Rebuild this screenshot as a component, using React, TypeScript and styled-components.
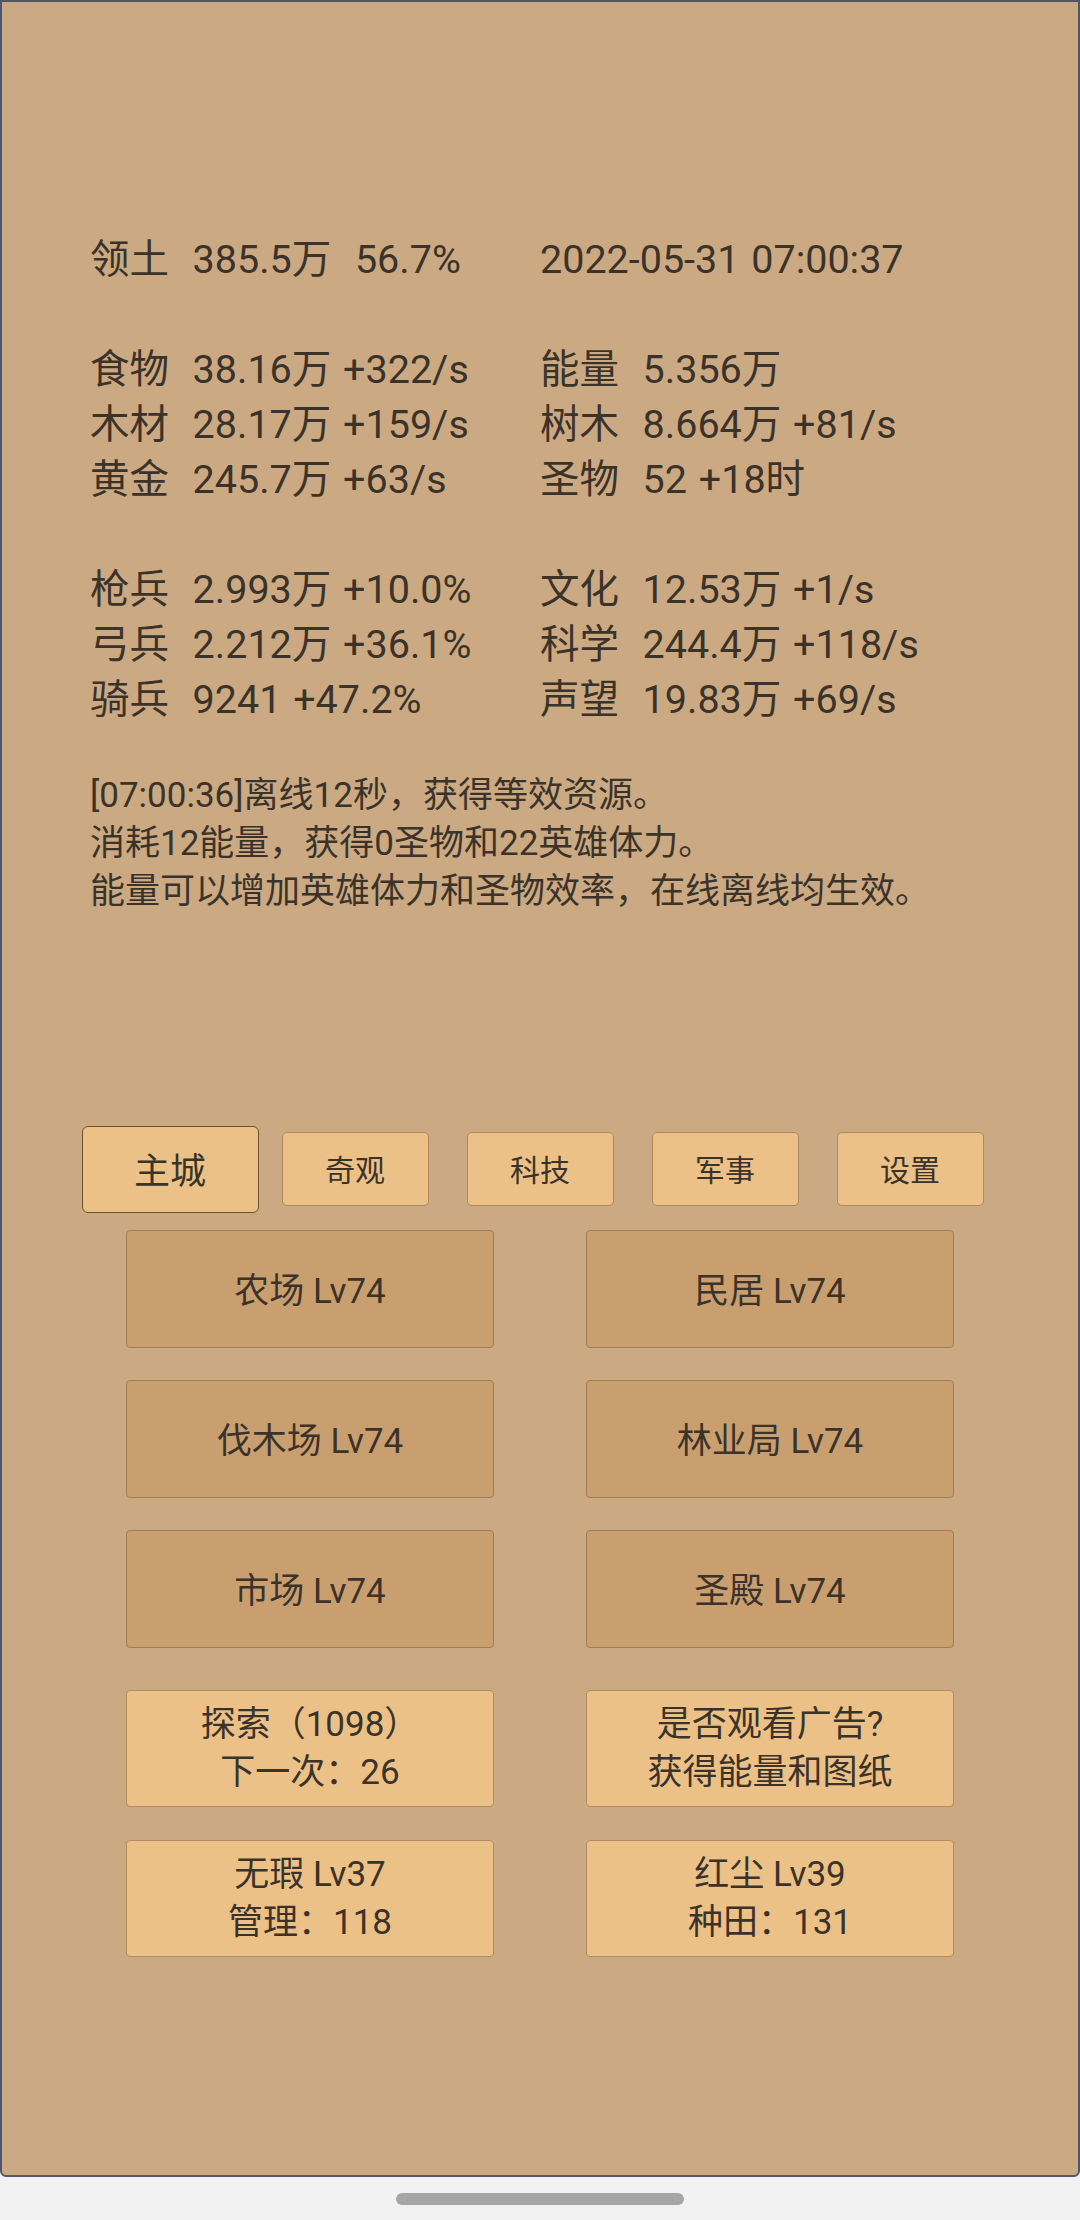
import React from "react";
import styled, { createGlobalStyle, css } from "styled-components";

const GlobalStyle = createGlobalStyle`
  html, body {
    margin: 0;
    padding: 0;
    background: #f2f2f2;
  }
  * {
    box-sizing: border-box;
  }
`;

const fontStack = `"Roboto", "Noto Sans CJK SC", sans-serif`;

const Screen = styled.div`
  width: 1080px;
  height: 2220px;
  display: flex;
  flex-direction: column;
  background: #f2f2f2;
  font-family: ${fontStack};
  color: #3b3329;
`;

const Panel = styled.div`
  height: 2177px;
  background: #cba983;
  border: 2px solid #4f5670;
  border-radius: 0 0 6px 6px;
  display: flex;
  flex-direction: column;
  padding-top: 230px;
`;

const Stats = styled.div`
  padding-left: 88px;
  font-size: 39.5px;
  line-height: 55px;
  word-spacing: 2px;
  display: grid;
  grid-template-columns: 450px auto;
  grid-auto-rows: 55px;
`;

const StatCell = styled.div`
  white-space: pre;
`;

const Log = styled.div`
  margin-top: 45px;
  padding-left: 88px;
  font-size: 35px;
  line-height: 48px;
`;

const TabRow = styled.div`
  margin-top: 209px;
  height: 88px;
  display: flex;
  justify-content: center;
  align-items: center;
`;

const TabSlot = styled.div`
  width: 185px;
  display: flex;
  justify-content: center;
  align-items: center;
`;

const Tab = styled.div<{ $active?: boolean }>`
  width: 147px;
  height: 74px;
  display: flex;
  align-items: center;
  justify-content: center;
  padding-bottom: 3px;
  background: #ebc187;
  border: 1.5px solid #ad8a5c;
  border-radius: 5px;
  font-size: 30px;
  ${({ $active }) =>
    $active &&
    css`
      width: 177px;
      height: 87px;
      font-size: 36px;
      border-color: #6e502d;
      border-radius: 6px;
    `}
`;

const Grid = styled.div<{ $top: number }>`
  margin-top: ${({ $top }) => $top}px;
  display: grid;
  grid-template-columns: 368px 368px;
  column-gap: 92px;
  justify-content: center;
`;

const Building = styled.div`
  height: 118px;
  display: flex;
  align-items: center;
  justify-content: center;
  padding-bottom: 3px;
  background: #c99f6f;
  border: 1.5px solid #a07d55;
  border-radius: 4px;
  font-size: 35px;
`;

const ActionButton = styled.div`
  height: 117px;
  display: flex;
  flex-direction: column;
  align-items: center;
  justify-content: center;
  background: #ebc187;
  border: 1.5px solid #b08d60;
  border-radius: 4px;
  font-size: 35px;
  line-height: 48px;
  text-align: center;
`;

const NavArea = styled.div`
  flex: 1;
  display: flex;
  align-items: center;
  justify-content: center;
`;

const HomeBar = styled.div`
  width: 288px;
  height: 12px;
  border-radius: 6px;
  background: #a6a6a6;
`;

const statRows: [string, string][] = [
  ["领土  385.5万  56.7%", "2022-05-31 07:00:37"],
  ["", ""],
  ["食物  38.16万 +322/s", "能量  5.356万"],
  ["木材  28.17万 +159/s", "树木  8.664万 +81/s"],
  ["黄金  245.7万 +63/s", "圣物  52 +18时"],
  ["", ""],
  ["枪兵  2.993万 +10.0%", "文化  12.53万 +1/s"],
  ["弓兵  2.212万 +36.1%", "科学  244.4万 +118/s"],
  ["骑兵  9241 +47.2%", "声望  19.83万 +69/s"],
];

const logLines = [
  "[07:00:36]离线12秒，获得等效资源。",
  "消耗12能量，获得0圣物和22英雄体力。",
  "能量可以增加英雄体力和圣物效率，在线离线均生效。",
];

const tabs = ["主城", "奇观", "科技", "军事", "设置"];

const buildingRows = [
  ["农场 Lv74", "民居 Lv74"],
  ["伐木场 Lv74", "林业局 Lv74"],
  ["市场 Lv74", "圣殿 Lv74"],
];

const actionRows = [
  [
    ["探索（1098）", "下一次：26"],
    ["是否观看广告?", "获得能量和图纸"],
  ],
  [
    ["无瑕 Lv37", "管理：118"],
    ["红尘 Lv39", "种田：131"],
  ],
];

export default function App() {
  return (
    <>
      <GlobalStyle />
      <Screen>
        <Panel>
          <Stats>
            {statRows.map(([left, right], i) => (
              <React.Fragment key={i}>
                <StatCell>{left}</StatCell>
                <StatCell>{right}</StatCell>
              </React.Fragment>
            ))}
          </Stats>

          <Log>
            {logLines.map((line) => (
              <div key={line}>{line}</div>
            ))}
          </Log>

          <TabRow>
            {tabs.map((t, i) => (
              <TabSlot key={t}>
                <Tab $active={i === 0}>{t}</Tab>
              </TabSlot>
            ))}
          </TabRow>

          {buildingRows.map((row, i) => (
            <Grid key={i} $top={i === 0 ? 17 : 32}>
              {row.map((b) => (
                <Building key={b}>{b}</Building>
              ))}
            </Grid>
          ))}

          {actionRows.map((row, i) => (
            <Grid key={i} $top={i === 0 ? 42 : 33}>
              {row.map((lines) => (
                <ActionButton key={lines[0]}>
                  {lines.map((l) => (
                    <div key={l}>{l}</div>
                  ))}
                </ActionButton>
              ))}
            </Grid>
          ))}
        </Panel>
        <NavArea>
          <HomeBar />
        </NavArea>
      </Screen>
    </>
  );
}
